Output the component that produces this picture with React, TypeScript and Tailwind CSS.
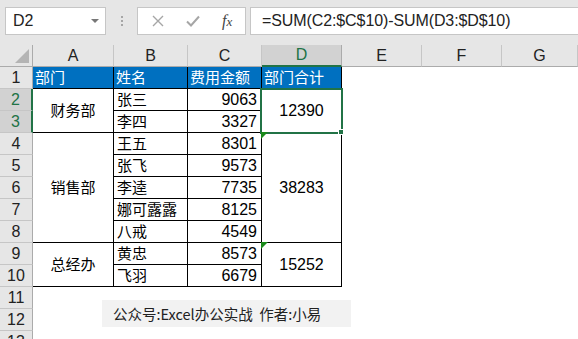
import React from 'react';

const COLS = ['A', 'B', 'C', 'D', 'E', 'F', 'G'];

const cjk = "font-['Noto_Sans_CJK_SC',sans-serif]";
const latin = "font-['Liberation_Sans','Noto_Sans_CJK_SC',sans-serif]";

const RowHead = ({ n, active }: { n: number; active?: boolean }) => (
  <div
    className={
      active
        ? 'flex items-center justify-center bg-[#d2d2d2] text-[#217346] border-r-2 border-r-[#217346] border-b border-b-[#c6c6c6] text-[16px]'
        : 'flex items-center justify-center bg-[#e6e6e6] text-[#222] border-r border-r-[#ababab] border-b border-b-[#c6c6c6] text-[16px]'
    }
  >
    {n}
  </div>
);

const HeadCell = ({ children }: { children: React.ReactNode }) => (
  <div className={`flex items-center pl-[2px] bg-[#0070c0] text-white border-r border-b border-black text-[15px] ${cjk}`}>
    {children}
  </div>
);

const NameCell = ({ children }: { children: React.ReactNode }) => (
  <div className={`flex items-center pl-[3px] border-r border-b border-black text-[15px] ${cjk}`}>{children}</div>
);

const NumCell = ({ children }: { children: React.ReactNode }) => (
  <div className="flex items-center justify-end pr-[4px] border-r border-b border-black text-[16px]">{children}</div>
);

// green "number stored as formula" marker in the top-left corner
const ErrorMark = () => (
  <div className="absolute z-20 -left-px -top-px w-0 h-0 border-t-[7px] border-t-[#1a8a1a] border-r-[7px] border-r-transparent" />
);

const Empty = () => <div />;

export default function App() {
  return (
    <div className={`w-[578px] h-[339px] overflow-hidden bg-white ${latin} text-black`}>
      {/* formula bar */}
      <div className="h-[45px] bg-[#e6e6e6] flex items-start pt-[7px] pl-[5px]">
        <div className="w-[101px] h-[28px] bg-white border border-[#c6c6c6] flex items-center justify-between pl-[7px] pr-[6px]">
          <span className="text-[16px] text-[#222]">D2</span>
          <div className="w-0 h-0 border-l-[4px] border-r-[4px] border-t-[4px] border-l-transparent border-r-transparent border-t-[#777]" />
        </div>
        <div className="w-[31px] h-[28px] flex flex-col items-center justify-center gap-[2px]">
          <div className="w-[2px] h-[2px] bg-[#a6a6a6]" />
          <div className="w-[2px] h-[2px] bg-[#a6a6a6]" />
          <div className="w-[2px] h-[2px] bg-[#a6a6a6]" />
        </div>
        <div className="w-[109px] h-[28px] bg-white border border-[#c6c6c6] flex items-center">
          <svg width="12" height="12" viewBox="0 0 12 12" className="ml-[14px]">
            <path d="M1 1L11 11M11 1L1 11" stroke="#a6a6a6" strokeWidth="1.4" />
          </svg>
          <svg width="14" height="12" viewBox="0 0 14 12" className="ml-[22px]">
            <path d="M1 6.5L5 10.5L13 1.5" stroke="#a6a6a6" strokeWidth="2" fill="none" />
          </svg>
          <span className="ml-[22px] text-[16px] italic text-[#444] font-['Liberation_Serif',serif]">
            f<span className="text-[13px]">x</span>
          </span>
        </div>
        <div className="ml-[4px] flex-1 h-[28px] bg-white border border-[#c6c6c6] border-r-0 flex items-center pl-[11px]">
          <span className="text-[16px] tracking-[-0.1px] text-[#222] whitespace-nowrap">=SUM(C2:$C$10)-SUM(D3:$D$10)</span>
        </div>
      </div>

      {/* sheet */}
      <div className="relative grid grid-cols-[33px_81px_74px_74px_80px_80px_80px_76px] auto-rows-[22px]">
        {/* column headers */}
        <div className="relative bg-[#e6e6e6] border-r border-r-[#ababab] border-b border-b-[#ababab]">
          <div className="absolute right-[3px] bottom-[3px] w-0 h-0 border-l-[14px] border-l-transparent border-b-[14px] border-b-[#b4b4b4]" />
        </div>
        {COLS.map((c) =>
          c === 'D' ? (
            <div
              key={c}
              className="flex items-center justify-center bg-[#d2d2d2] text-[#217346] border-r border-r-[#ababab] border-b-2 border-b-[#217346] text-[16px]"
            >
              {c}
            </div>
          ) : (
            <div
              key={c}
              className="flex items-center justify-center bg-[#e6e6e6] text-[#222] border-r border-r-[#c6c6c6] border-b border-b-[#ababab] text-[16px]"
            >
              {c}
            </div>
          )
        )}

        {/* row 1 */}
        <RowHead n={1} />
        <HeadCell>部门</HeadCell>
        <HeadCell>姓名</HeadCell>
        <HeadCell>费用金额</HeadCell>
        <HeadCell>部门合计</HeadCell>
        <Empty />
        <Empty />
        <Empty />

        {/* row 2 */}
        <RowHead n={2} active />
        <div className={`row-span-2 flex items-center justify-center border-r border-b border-black text-[15px] ${cjk}`}>财务部</div>
        <NameCell>张三</NameCell>
        <NumCell>9063</NumCell>
        <div className="relative row-span-2 flex items-center justify-center border-r border-b border-black text-[16px]">
          12390
          <div className="absolute z-10 -left-[2px] -top-px w-[83px] h-[46px] border-2 border-[#217346]">
            <div className="absolute -right-[3px] -bottom-[3px] w-[6px] h-[6px] bg-[#217346] border border-white" />
          </div>
        </div>
        <Empty />
        <Empty />
        <Empty />

        {/* row 3 */}
        <RowHead n={3} active />
        <NameCell>李四</NameCell>
        <NumCell>3327</NumCell>
        <Empty />
        <Empty />
        <Empty />

        {/* row 4 */}
        <RowHead n={4} />
        <div className={`row-span-5 flex items-center justify-center border-r border-b border-black text-[15px] ${cjk}`}>销售部</div>
        <NameCell>王五</NameCell>
        <NumCell>8301</NumCell>
        <div className="relative row-span-5 flex items-center justify-center border-r border-b border-black text-[16px]">
          <ErrorMark />
          38283
        </div>
        <Empty />
        <Empty />
        <Empty />

        {/* rows 5-8 */}
        <RowHead n={5} />
        <NameCell>张飞</NameCell>
        <NumCell>9573</NumCell>
        <Empty />
        <Empty />
        <Empty />

        <RowHead n={6} />
        <NameCell>李逵</NameCell>
        <NumCell>7735</NumCell>
        <Empty />
        <Empty />
        <Empty />

        <RowHead n={7} />
        <NameCell>娜可露露</NameCell>
        <NumCell>8125</NumCell>
        <Empty />
        <Empty />
        <Empty />

        <RowHead n={8} />
        <NameCell>八戒</NameCell>
        <NumCell>4549</NumCell>
        <Empty />
        <Empty />
        <Empty />

        {/* row 9 */}
        <RowHead n={9} />
        <div className={`row-span-2 flex items-center justify-center border-r border-b border-black text-[15px] ${cjk}`}>总经办</div>
        <NameCell>黄忠</NameCell>
        <NumCell>8573</NumCell>
        <div className="relative row-span-2 flex items-center justify-center border-r border-b border-black text-[16px]">
          <ErrorMark />
          15252
        </div>
        <Empty />
        <Empty />
        <Empty />

        {/* row 10 */}
        <RowHead n={10} />
        <NameCell>飞羽</NameCell>
        <NumCell>6679</NumCell>
        <Empty />
        <Empty />
        <Empty />

        {/* rows 11-13 */}
        {[11, 12, 13].map((n) => (
          <React.Fragment key={n}>
            <RowHead n={n} />
            <Empty />
            <Empty />
            <Empty />
            <Empty />
            <Empty />
            <Empty />
            <Empty />
          </React.Fragment>
        ))}

        {/* floating text box */}
        <div className={`absolute left-[102px] top-[255px] w-[249px] h-[27px] bg-[#f2f2f2] flex items-center pl-[11px] text-[14.5px] text-[#222] ${cjk}`}>
          公众号:Excel办公实战&nbsp;&nbsp;作者:小易
        </div>
      </div>
    </div>
  );
}
